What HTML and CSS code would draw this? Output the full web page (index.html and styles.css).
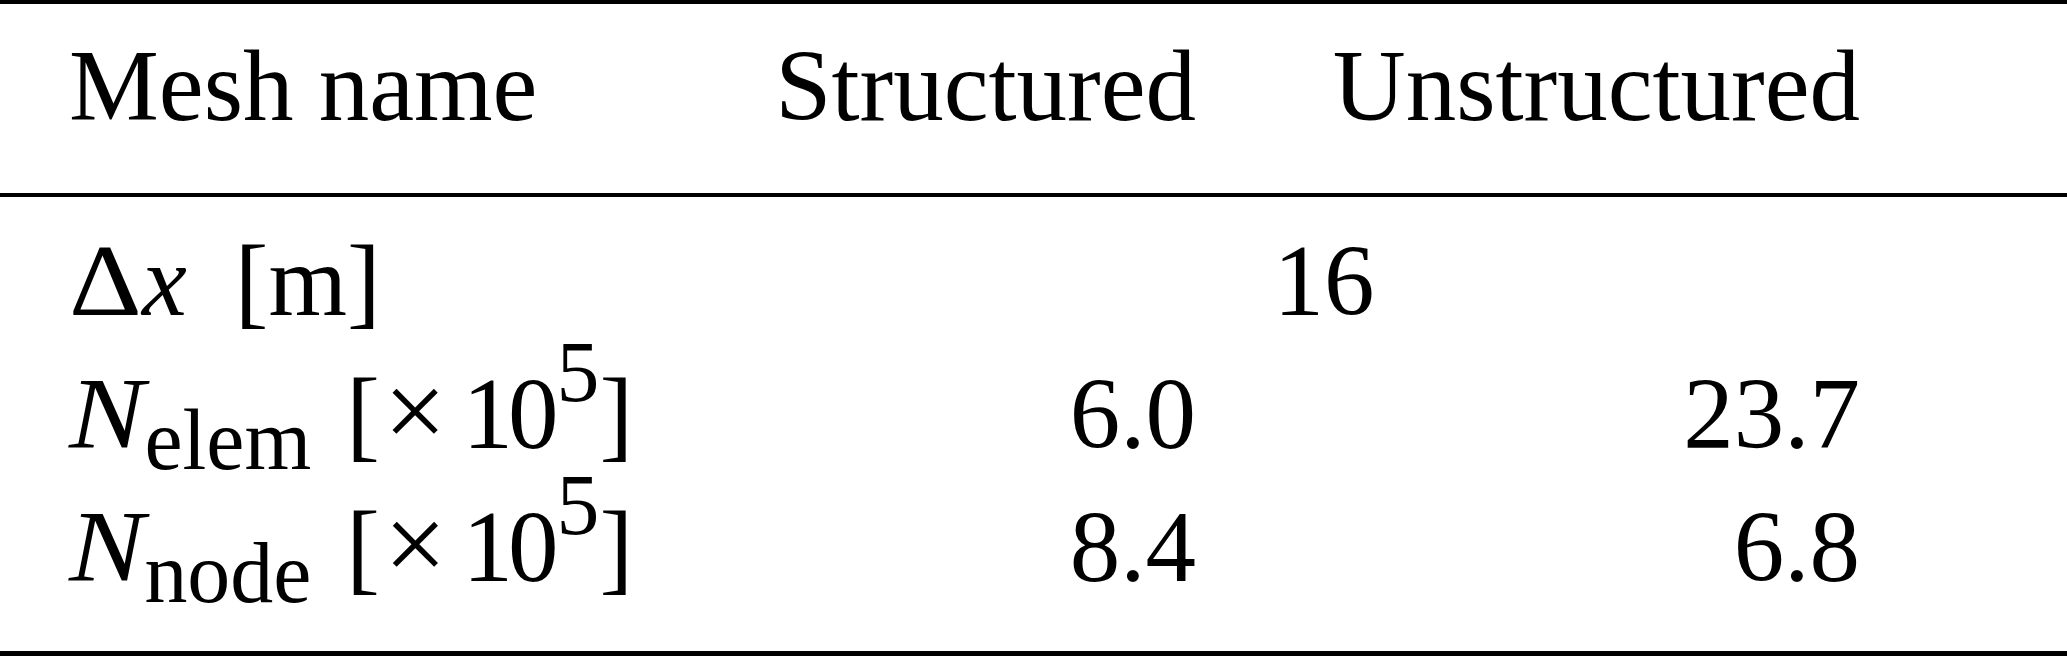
FILE: index.html
```html
<!DOCTYPE html>
<html lang="en">
<head>
    <meta charset="UTF-8">
    <meta name="viewport" content="width=device-width, initial-scale=1.0">
    <title>Mesh parameters</title>
    <link rel="stylesheet" href="styles.css">
</head>
<body>

    <table class="mesh-table">
        <colgroup>
            <col class="col-name">
            <col class="col-struct">
            <col class="col-unstruct">
        </colgroup>
        <thead>
            <tr>
                <th class="name">Mesh name</th>
                <th class="num struct">Structured</th>
                <th class="num unstruct">Unstructured</th>
            </tr>
        </thead>
        <tbody>
            <tr class="first-row">
                <td class="name"><span class="delta">&Delta;</span><i>x</i><span class="gap"></span>[m]</td>
                <td class="span" colspan="2">16</td>
            </tr>
            <tr>
                <td class="name"><i class="n">N</i><sub>elem</sub><span class="gap gap-s"></span>[<span class="times">&times;</span><span class="ten">10</span><sup>5</sup>]</td>
                <td class="num struct">6.0</td>
                <td class="num unstruct">23.7</td>
            </tr>
            <tr class="last-row">
                <td class="name"><i class="n">N</i><sub>node</sub><span class="gap gap-s"></span>[<span class="times">&times;</span><span class="ten">10</span><sup>5</sup>]</td>
                <td class="num struct">8.4</td>
                <td class="num unstruct">6.8</td>
            </tr>
        </tbody>
    </table>

</body>
</html>
```

FILE: styles.css
```css
* { margin: 0; padding: 0; box-sizing: border-box; }
body {
    background: #fff;
    color: #000;
    font-family: 'Liberation Serif', 'Times New Roman', serif;
}
.mesh-table {
    width: 2067px;
    table-layout: fixed;
    border-collapse: separate;
    border-spacing: 0;
    font-size: 101px;
    line-height: 133px;
}
.col-name { width: 760px; }
.col-struct { width: 505px; }
.col-unstruct { width: 802px; }
th, td {
    padding: 0;
    font-weight: normal;
    white-space: nowrap;
}
.name {
    text-align: left;
    padding-left: 69px;
}
.num { text-align: right; }
.struct { padding-right: 69px; }
.unstruct { padding-right: 207px; }
.span {
    text-align: center;
    padding-left: 4px;
    padding-right: 183px;
}

/* booktabs style rules */
thead th {
    border-top: 4px solid #000;
    border-bottom: 4px solid #000;
    padding-top: 16px;
    padding-bottom: 40px;
}
.first-row td { padding-top: 18px; }
.last-row td {
    padding-bottom: 37px;
    border-bottom: 5px solid #000;
}

/* math bits */
.delta {
    display: inline-block;
    transform: scaleX(1.12);
    transform-origin: left;
    margin-right: 8px;
}
.n {
    display: inline-block;
    transform: scaleX(1.12);
    transform-origin: left;
}
.gap {
    display: inline-block;
    width: 48px;
}
.gap-s { width: 35px; }
.times {
    font-size: 1.1em;
    line-height: 0;
    margin: 0 16px 0 4px;
}
.ten { letter-spacing: -5px; }
sub, sup {
    font-size: 0.85em;
    line-height: 0;
}
sub {
    vertical-align: -0.24em;
    margin-left: 8px;
}
sup {
    vertical-align: 0.55em;
    margin-left: 3px;
}
```
